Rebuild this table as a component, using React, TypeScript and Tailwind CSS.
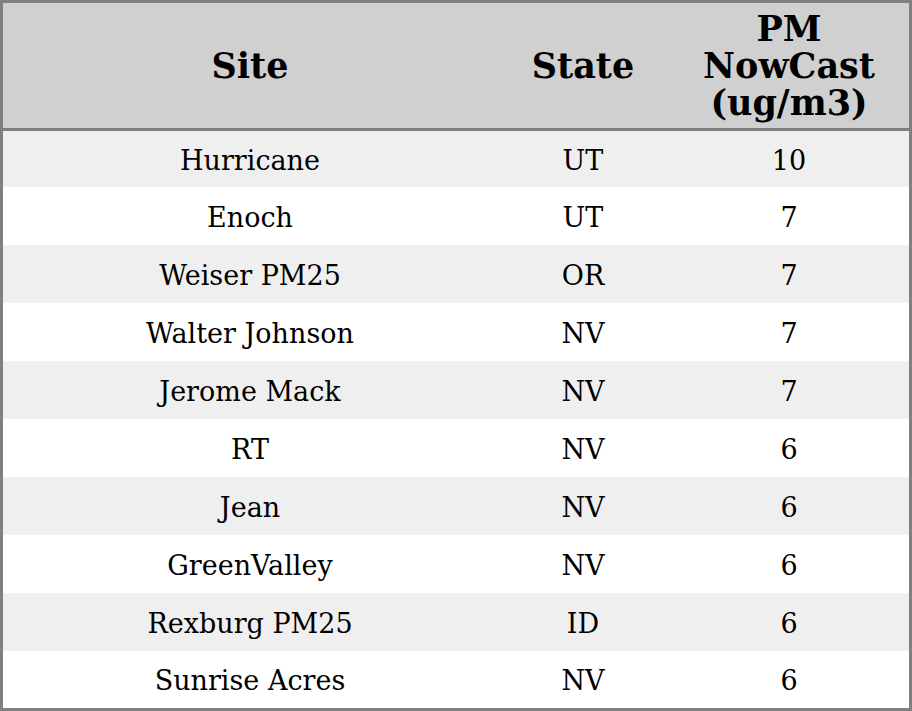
import React from "react";

const rows: [string, string, string][] = [
  ["Hurricane", "UT", "10"],
  ["Enoch", "UT", "7"],
  ["Weiser PM25", "OR", "7"],
  ["Walter Johnson", "NV", "7"],
  ["Jerome Mack", "NV", "7"],
  ["RT", "NV", "6"],
  ["Jean", "NV", "6"],
  ["GreenValley", "NV", "6"],
  ["Rexburg PM25", "ID", "6"],
  ["Sunrise Acres", "NV", "6"],
];

const rowHeights = ["h-[56px]", "h-[58px]", "h-[58px]", "h-[58px]", "h-[58px]", "h-[58px]", "h-[58px]", "h-[58px]", "h-[58px]", "h-[57px]"];

export default function App() {
  return (
    <div className="w-[912px] h-[711px] bg-white font-['DejaVu_Serif',serif] text-black">
      <div className="border-[3px] border-[#808080]">
        <div className="grid grid-cols-[494px_172px_240px] h-[128px] bg-[#d0d0d0] border-b-[3px] border-[#808080] font-bold text-[35px] leading-[37px]">
          <div className="flex items-center justify-center">Site</div>
          <div className="flex items-center justify-center">State</div>
          <div className="flex flex-col items-center justify-center text-center">
            <span>PM</span>
            <span>NowCast</span>
            <span>(ug/m3)</span>
          </div>
        </div>
        {rows.map((r, i) => (
          <div
            key={r[0]}
            className={`grid grid-cols-[494px_172px_240px] text-[27px] pt-[4px] ${rowHeights[i]} ${
              i % 2 === 0 ? "bg-[#efefef]" : "bg-white"
            }`}
          >
            <div className="flex items-center justify-center">{r[0]}</div>
            <div className="flex items-center justify-center">{r[1]}</div>
            <div className="flex items-center justify-center">{r[2]}</div>
          </div>
        ))}
      </div>
    </div>
  );
}
